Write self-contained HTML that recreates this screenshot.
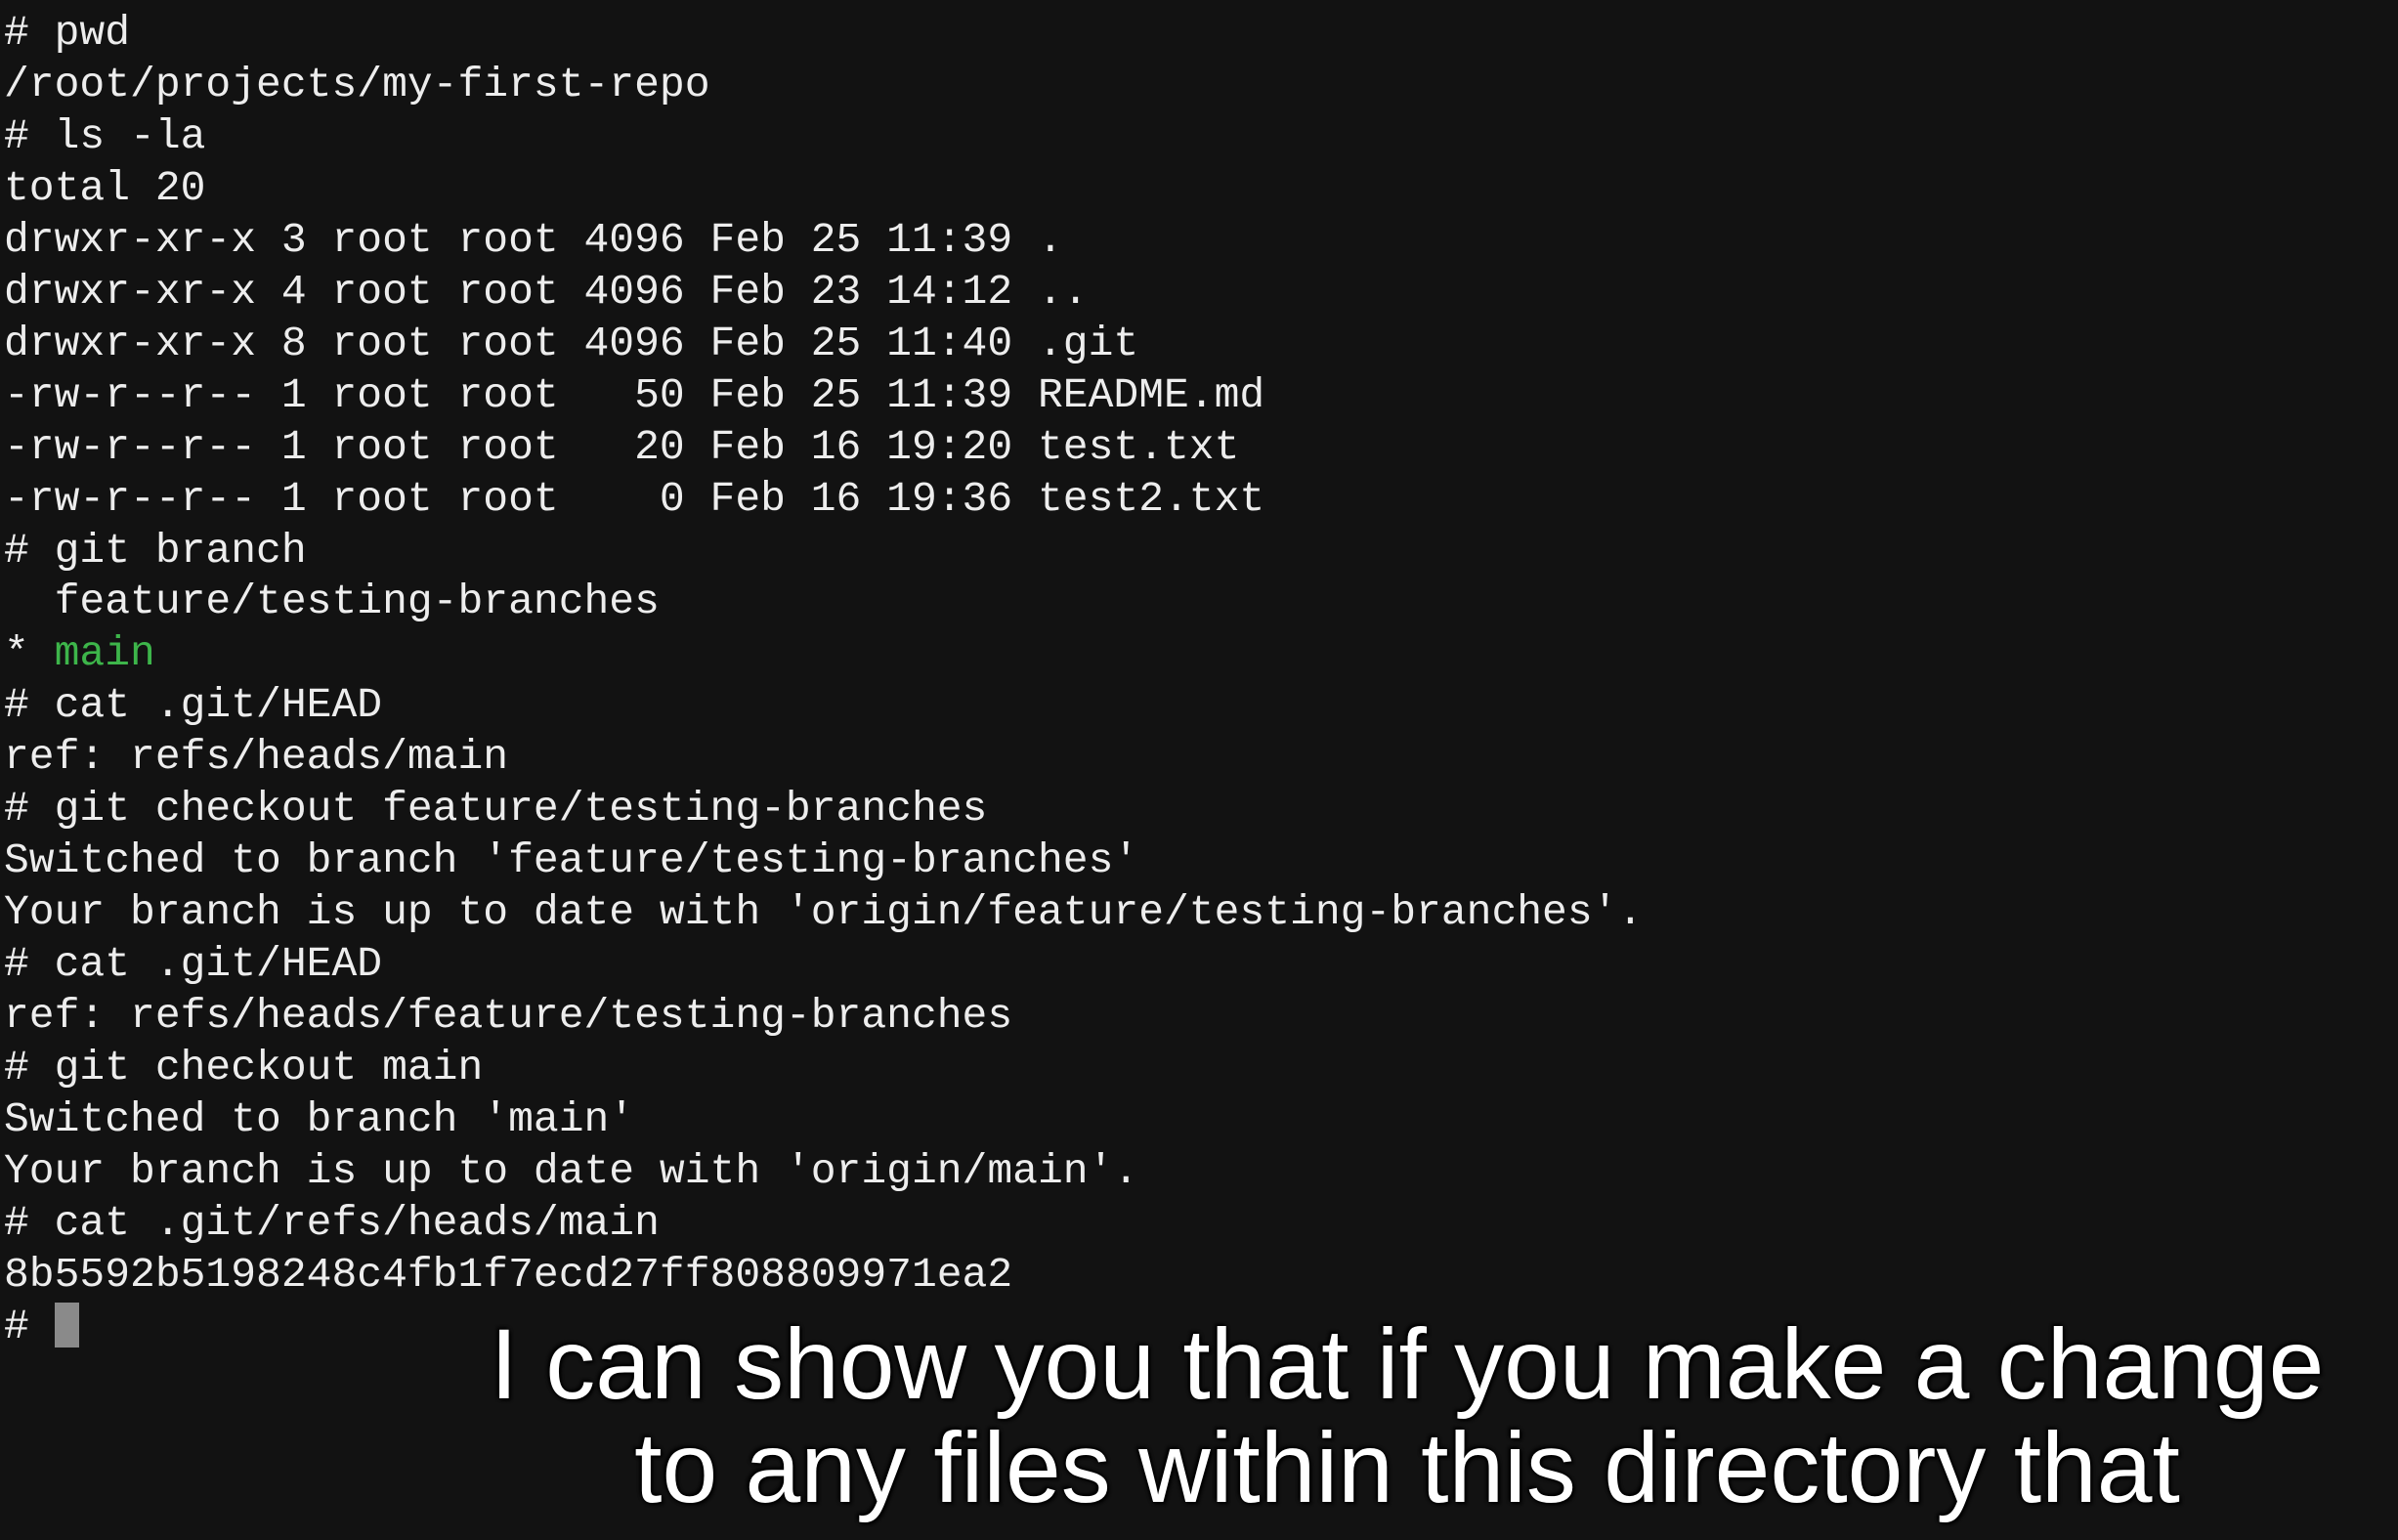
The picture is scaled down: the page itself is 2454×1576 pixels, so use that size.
<!DOCTYPE html>
<html><head><meta charset="utf-8"><style>
html,body{margin:0;padding:0;background:#121212;width:2454px;height:1576px;overflow:hidden;position:relative}
.t{position:absolute;left:4px;top:8px;font-family:"Liberation Mono",monospace;font-size:43px;line-height:52.95px;color:#ededed;white-space:pre;margin:0}
.g{color:#3db54a}
.c{display:inline-block;width:25px;height:46px;background:#8a8a8a;vertical-align:-10px}
.s{position:absolute;left:0;width:2880px;text-align:center;font-family:"Liberation Sans",Arial,sans-serif;font-size:102px;color:#fff;white-space:nowrap;text-shadow:0 0 4px #000,2px 2px 3px #000,-2px -2px 3px #000}
</style></head><body>
<pre class="t"># pwd
/root/projects/my-first-repo
# ls -la
total 20
drwxr-xr-x 3 root root 4096 Feb 25 11:39 .
drwxr-xr-x 4 root root 4096 Feb 23 14:12 ..
drwxr-xr-x 8 root root 4096 Feb 25 11:40 .git
-rw-r--r-- 1 root root   50 Feb 25 11:39 README.md
-rw-r--r-- 1 root root   20 Feb 16 19:20 test.txt
-rw-r--r-- 1 root root    0 Feb 16 19:36 test2.txt
# git branch
  feature/testing-branches
* <span class="g">main</span>
# cat .git/HEAD
ref: refs/heads/main
# git checkout feature/testing-branches
Switched to branch 'feature/testing-branches'
Your branch is up to date with 'origin/feature/testing-branches'.
# cat .git/HEAD
ref: refs/heads/feature/testing-branches
# git checkout main
Switched to branch 'main'
Your branch is up to date with 'origin/main'.
# cat .git/refs/heads/main
8b5592b5198248c4fb1f7ecd27ff808809971ea2
# <span class="c"></span></pre>
<div class="s" style="top:1338px">I can show you that if you make a change</div>
<div class="s" style="top:1444px">to any files within this directory that</div>
</body></html>
